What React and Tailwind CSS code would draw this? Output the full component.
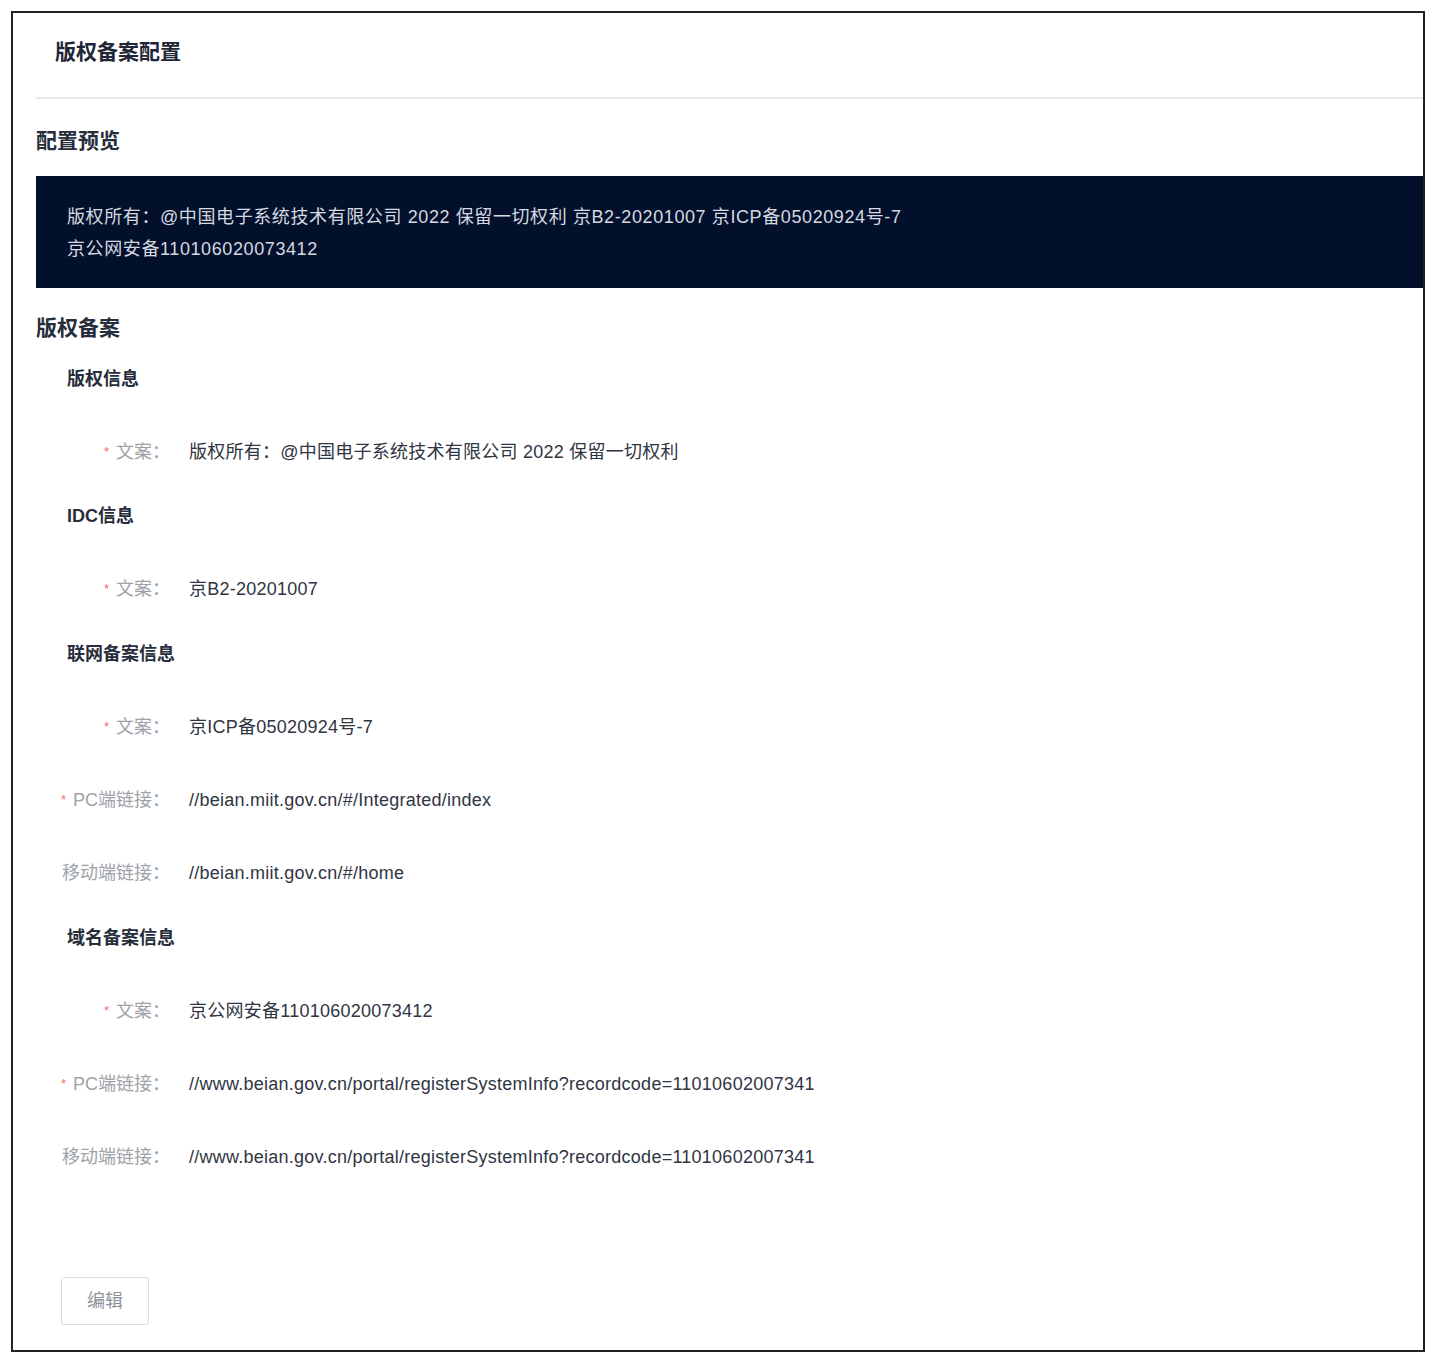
import React from 'react';

const font = { fontFamily: '"Liberation Sans", "Noto Sans CJK SC", sans-serif' };

const records = [
  {
    title: '版权信息',
    rows: [{ label: '文案', required: true, value: '版权所有：@中国电子系统技术有限公司 2022 保留一切权利' }],
  },
  {
    title: 'IDC信息',
    rows: [{ label: '文案', required: true, value: '京B2-20201007' }],
  },
  {
    title: '联网备案信息',
    rows: [
      { label: '文案', required: true, value: '京ICP备05020924号-7' },
      { label: 'PC端链接', required: true, value: '//beian.miit.gov.cn/#/Integrated/index' },
      { label: '移动端链接', required: false, value: '//beian.miit.gov.cn/#/home' },
    ],
  },
  {
    title: '域名备案信息',
    rows: [
      { label: '文案', required: true, value: '京公网安备110106020073412' },
      { label: 'PC端链接', required: true, value: '//www.beian.gov.cn/portal/registerSystemInfo?recordcode=11010602007341' },
      { label: '移动端链接', required: false, value: '//www.beian.gov.cn/portal/registerSystemInfo?recordcode=11010602007341' },
    ],
  },
];

const FieldRow = ({ label, required, value }) => (
  <div className="flex items-center mt-[45px] leading-[28px] text-[18px]">
    <div className="w-[134px] shrink-0 text-right text-[#9ea2a9] whitespace-nowrap">
      {required && <span className="text-[#f56c6c] text-[13px] mr-[7px] align-top">*</span>}
      {label}：
    </div>
    <div className="pl-[19px] text-[#2f3542] whitespace-nowrap tracking-[0.25px]">{value}</div>
  </div>
);

const App = () => {
  return (
    <div className="min-h-screen bg-white p-[11px]" style={font}>
      <div className="w-[1414px] h-[1341px] border-2 border-[#222222] pl-[23px] pt-[24px]">
        <h1 className="pl-[19px] text-[21px] leading-[30px] font-bold text-[#1f2637]">版权备案配置</h1>
        <div className="mt-[30px] h-[2px] bg-[#e7e9ec]" />

        <h2 className="mt-[27px] text-[21px] leading-[30px] font-semibold text-[#262d3b]">配置预览</h2>
        <div className="mt-[20px] h-[112px] bg-[#03102b] pl-[31px] pt-[25px] text-[18px] leading-[32px] tracking-[0.6px] text-[#d5d9e0]">
          <div>版权所有：@中国电子系统技术有限公司 2022 保留一切权利 京B2-20201007 京ICP备05020924号-7</div>
          <div>京公网安备110106020073412</div>
        </div>

        <h2 className="mt-[25px] text-[21px] leading-[30px] font-semibold text-[#262d3b]">版权备案</h2>
        <div className="mt-[22px]">
          {records.map((rec, i) => (
            <div key={rec.title} className={i === 0 ? '' : i === 1 ? 'mt-[36px]' : 'mt-[37px]'}>
              <h3 className="pl-[31px] text-[18px] leading-[28px] font-bold text-[#262d3b]">{rec.title}</h3>
              {rec.rows.map((row, j) => (
                <FieldRow key={j} {...row} />
              ))}
            </div>
          ))}
        </div>

        <button className="mt-[106px] ml-[25px] w-[88px] h-[48px] border border-[#d9dce1] rounded-[3px] bg-white text-[18px] text-[#8e939b]">
          编辑
        </button>
      </div>
    </div>
  );
};

export default App;
